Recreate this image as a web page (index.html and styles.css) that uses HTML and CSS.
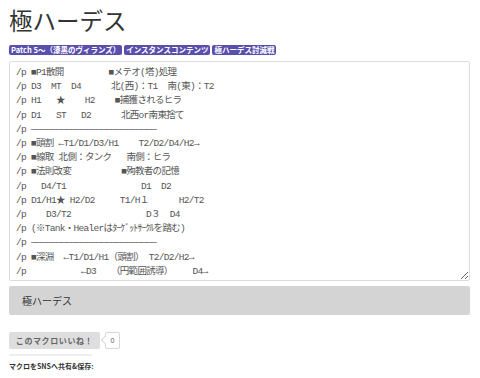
FILE: index.html
```html
<!DOCTYPE html>
<html lang="ja">
<head>
<meta charset="utf-8">
<link rel="stylesheet" href="styles.css">
</head>
<body>
<div class="page">
  <h1 class="title">極ハーデス</h1>
  <div class="tags">
    <span class="tag">Patch 5～（漆黒のヴィランズ）</span>
    <span class="tag">インスタンスコンテンツ</span>
    <span class="tag">極ハーデス討滅戦</span>
  </div>
  <textarea class="macro" readonly spellcheck="false">/p ■P1散開         ■メテオ(塔)処理
/p D3  MT  D4      北(西)：T1  南(東)：T2
/p H1   ★    H2    ■捕獲されるヒラ
/p D1   ST   D2      北西or南東捨て
/p —————————————————————————
/p ■頭割 ←T1/D1/D3/H1    T2/D2/D4/H2→
/p ■線取 北側：タンク   南側：ヒラ
/p ■法則改変          ■殉教者の記憶
/p   D4/T1               D1  D2
/p D1/H1★ H2/D2     T1/H１      H2/T2
/p    D3/T2               D３  D4
/p (※Tank・Healerはﾀｰｹﾞｯﾄｻｰｸﾙを踏む)
/p —————————————————————————
/p ■深淵  ←T1/D1/H1（頭割） T2/D2/H2→
/p           ←D3   （円範囲誘導）    D4→</textarea>
  <div class="name-box">極ハーデス</div>
  <div class="like-row">
    <button class="like-btn" type="button">このマクロいいね！</button>
    <span class="like-count">0</span>
  </div>
  <div class="divider"></div>
  <p class="share">マクロをSNSへ共有&amp;保存:</p>
</div>
</body>
</html>
```

FILE: styles.css
```css
html, body {
  margin: 0;
  padding: 0;
  background: #fff;
}

.page {
  padding: 4px 10px 0 9px;
  font-family: "Noto Sans CJK JP", "Noto Sans", sans-serif;
  color: #333;
}

.title {
  margin: 0;
  font-size: 23.5px;
  line-height: 32px;
  font-weight: normal;
  color: #333;
}

.tags {
  display: flex;
  gap: 2px;
  margin-top: 9px;
}

.tag {
  display: inline-block;
  background: #5b4fae;
  color: #fff;
  font-size: 7.5px;
  font-weight: bold;
  line-height: 10px;
  padding: 0 2px;
  border-radius: 2px;
  white-space: nowrap;
}

.macro {
  display: block;
  box-sizing: border-box;
  width: 100%;
  height: 220px;
  margin: 6px 0 0;
  padding: 4px 6px 2px;
  border: 1px solid #dcdcdc;
  border-radius: 2px;
  font-family: "Liberation Mono", "Noto Sans CJK JP", monospace;
  font-size: 9.5px;
  letter-spacing: -0.7px;
  line-height: 14.2px;
  color: #555;
  background: #fff;
  white-space: pre;
  overflow: hidden;
  resize: both;
  outline: none;
}

.name-box {
  margin-top: 5px;
  height: 29px;
  background: #d4d4d4;
  border-radius: 2px;
  padding-left: 13px;
  font-size: 10px;
  line-height: 29px;
  color: #333;
}

.like-row {
  display: flex;
  align-items: center;
  gap: 5px;
  margin-top: 17px;
}

.like-btn {
  height: 17px;
  width: 91px;
  padding: 0;
  border: none;
  border-radius: 2px;
  background: #dedede;
  color: #666;
  font-family: "Noto Sans CJK JP", sans-serif;
  font-size: 8px;
  font-weight: bold;
  letter-spacing: 0.6px;
  line-height: 17px;
}

.like-count {
  position: relative;
  box-sizing: border-box;
  width: 15px;
  height: 17px;
  border: 1px solid #d6d6d6;
  border-radius: 2px;
  background: #fff;
  font-family: "Liberation Sans", sans-serif;
  font-size: 7px;
  line-height: 15px;
  text-align: center;
  color: #555;
}

.like-count::before {
  content: "";
  position: absolute;
  left: -4px;
  top: 4px;
  width: 5px;
  height: 5px;
  background: #fff;
  border-left: 1px solid #d6d6d6;
  border-bottom: 1px solid #d6d6d6;
  transform: rotate(45deg);
}

.divider {
  margin-top: 5px;
  width: 83px;
  height: 2px;
  background: #eee;
}

.share {
  margin: 5px 0 0;
  font-size: 7px;
  font-weight: bold;
  line-height: 10px;
  color: #333;
}
```
